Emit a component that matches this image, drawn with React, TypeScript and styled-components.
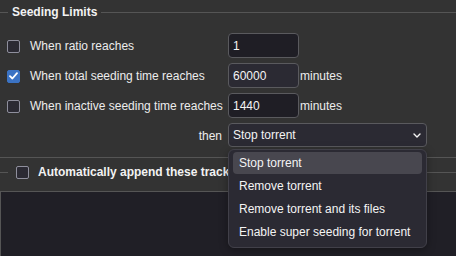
import React, { useState } from 'react';
import styled, { createGlobalStyle } from 'styled-components';

const GlobalStyle = createGlobalStyle`
  html, body {
    margin: 0;
    padding: 0;
    background-color: #333333;
    overflow: hidden;
  }
  body {
    font-family: 'Liberation Sans', Arial, sans-serif;
    font-size: 12px;
    color: #ececec;
  }
`;

const Page = styled.div`
  width: 100%;
  height: 256px;
  padding-top: 5px;
  box-sizing: border-box;
  overflow: hidden;
`;

const Group = styled.fieldset<{ $gap?: number }>`
  margin: ${(p) => p.$gap ?? 0}px 0 0 0;
  padding: 14px 0 10px 0;
  min-width: 0;
  border: none;
  border-top: 1px solid #555555;
  border-bottom: 1px solid #555555;
`;

const OpenGroup = styled(Group)`
  padding: 12px 0 0 0;
  border-bottom: none;
`;

const Legend = styled.legend`
  margin-left: 8px;
  padding: 0 4px;
  line-height: 14px;
  font-weight: 700;
  color: #f2f2f2;
`;

const CheckLegend = styled(Legend)`
  display: flex;
  align-items: center;
  padding: 0 4px 0 8px;
  gap: 9px;
`;

const Grid = styled.div`
  display: grid;
  grid-template-columns: 222px auto;
  grid-template-rows: 25px 25px 25px 24px;
  column-gap: 6px;
  row-gap: 5px;
`;

const LabelCell = styled.label<{ $right?: boolean }>`
  display: flex;
  align-items: center;
  justify-content: ${(p) => (p.$right ? 'flex-end' : 'flex-start')};
  gap: 10px;
  padding-left: ${(p) => (p.$right ? 0 : 7)}px;
  padding-top: 1px;
  white-space: nowrap;
`;

const Box = styled.span<{ $checked?: boolean }>`
  display: inline-flex;
  align-items: center;
  justify-content: center;
  width: 13px;
  height: 13px;
  box-sizing: border-box;
  border-radius: 2px;
  border: 1px solid ${(p) => (p.$checked ? '#3b73c4' : '#8f8f9d')};
  background-color: ${(p) => (p.$checked ? '#3b73c4' : '#2b2a33')};
  flex-shrink: 0;
`;

const ValueCell = styled.div`
  display: flex;
  align-items: center;
  gap: 1px;
`;

const NumberInput = styled.input<{ $hover?: boolean }>`
  width: 71px;
  height: 25px;
  box-sizing: border-box;
  margin: 0;
  padding: 0 4px;
  border: 1px solid #5a5a5e;
  border-radius: 4px;
  background-color: ${(p) => (p.$hover ? '#2b2a33' : '#1f1e25')};
  color: #f4f4f4;
  font-family: 'Liberation Sans', Arial, sans-serif;
  font-size: 12px;
  outline: none;
`;

const SelectWrap = styled.div`
  position: relative;
  width: 199px;
`;

const SelectBox = styled.div`
  display: flex;
  align-items: center;
  justify-content: space-between;
  height: 24px;
  box-sizing: border-box;
  padding: 0 5px 0 4px;
  border: 1px solid #5a5a5e;
  border-radius: 4px;
  background-color: #2b2a33;
  color: #f4f4f4;
`;

const Menu = styled.ul`
  position: absolute;
  top: 26px;
  left: 0;
  width: 199px;
  height: 99px;
  box-sizing: border-box;
  margin: 0;
  padding: 2px 4px 0 4px;
  list-style: none;
  background-color: #2b2a33;
  border: 1px solid #414049;
  border-radius: 6px;
  box-shadow: 0 2px 8px rgba(0, 0, 0, 0.35);
  z-index: 10;
`;

const MenuItem = styled.li<{ $active?: boolean }>`
  height: 22px;
  margin-bottom: 1px;
  display: flex;
  align-items: center;
  padding: 0 6px;
  border-radius: 4px;
  background-color: ${(p) => (p.$active ? '#48474f' : 'transparent')};
  color: #f4f4f4;
  white-space: nowrap;
`;

const TrackerArea = styled.div`
  height: 64px;
  border: 1px solid #555555;
  border-right: none;
  background-color: #201f26;
`;

const Check = ({ checked }: { checked?: boolean }) => (
  <Box $checked={checked}>
    {checked && (
      <svg width="9" height="8" viewBox="0 0 9 8">
        <polyline
          points="1,4.2 3.4,6.5 8,1.2"
          fill="none"
          stroke="#ffffff"
          strokeWidth="1.8"
          strokeLinecap="round"
          strokeLinejoin="round"
        />
      </svg>
    )}
  </Box>
);

const actions = [
  'Stop torrent',
  'Remove torrent',
  'Remove torrent and its files',
  'Enable super seeding for torrent',
];

const App = () => {
  const [ratio, setRatio] = useState('1');
  const [seeding, setSeeding] = useState('60000');
  const [inactive, setInactive] = useState('1440');

  return (
    <Page>
      <GlobalStyle />
      <Group>
        <Legend>Seeding Limits</Legend>
        <Grid>
          <LabelCell>
            <Check />
            When ratio reaches
          </LabelCell>
          <ValueCell>
            <NumberInput value={ratio} onChange={(e) => setRatio(e.target.value)} />
          </ValueCell>

          <LabelCell>
            <Check checked />
            When total seeding time reaches
          </LabelCell>
          <ValueCell>
            <NumberInput $hover value={seeding} onChange={(e) => setSeeding(e.target.value)} />
            minutes
          </ValueCell>

          <LabelCell>
            <Check />
            When inactive seeding time reaches
          </LabelCell>
          <ValueCell>
            <NumberInput value={inactive} onChange={(e) => setInactive(e.target.value)} />
            minutes
          </ValueCell>

          <LabelCell $right>then</LabelCell>
          <SelectWrap>
            <SelectBox>
              Stop torrent
              <svg width="8" height="5" viewBox="0 0 8 5">
                <polyline
                  points="1,1 4,4 7,1"
                  fill="none"
                  stroke="#f4f4f4"
                  strokeWidth="1.4"
                  strokeLinecap="round"
                  strokeLinejoin="round"
                />
              </svg>
            </SelectBox>
            <Menu>
              {actions.map((a, i) => (
                <MenuItem key={a} $active={i === 0}>
                  {a}
                </MenuItem>
              ))}
            </Menu>
          </SelectWrap>
        </Grid>
      </Group>

      <OpenGroup $gap={7}>
        <CheckLegend>
          <Check />
          Automatically append these trackers to new downloads:
        </CheckLegend>
        <TrackerArea />
      </OpenGroup>
    </Page>
  );
};

export default App;
